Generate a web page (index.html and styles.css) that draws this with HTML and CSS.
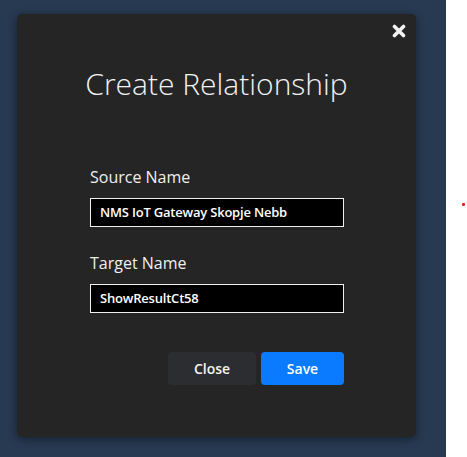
FILE: index.html
```html
<!DOCTYPE html>
<html>
<head>
<meta charset="utf-8">
<link rel="stylesheet" href="styles.css">
</head>
<body>
<div class="page">
  <div class="backdrop">
    <div class="dialog">
      <button class="close-x" aria-label="Close">
        <svg width="14" height="14" viewBox="0 0 14 14"><path d="M2.5 2.5 L11.5 11.5 M11.5 2.5 L2.5 11.5" stroke="#f2f2f2" stroke-width="3.6" stroke-linecap="round"/></svg>
      </button>
      <h1 class="title">Create Relationship</h1>
      <form class="form">
        <label class="label">Source Name</label>
        <div class="input">NMS IoT Gateway Skopje Nebb</div>
        <label class="label label-second">Target Name</label>
        <div class="input">ShowResultCt58</div>
        <div class="actions">
          <button type="button" class="btn btn-close">Close</button>
          <button type="button" class="btn btn-save">Save</button>
        </div>
      </form>
    </div>
  </div>
  <div class="side">
    <span class="dot"></span>
  </div>
</div>
</body>
</html>
```

FILE: styles.css
```css
* { box-sizing: border-box; }
html, body { margin: 0; padding: 0; background: #ffffff; }
body { font-family: "Open Sans", "Noto Sans", sans-serif; }
.page { display: flex; width: 467px; height: 457px; }
.backdrop {
  width: 446px;
  height: 457px;
  background: #273a52;
  padding: 14px 0 0 17px;
}
.dialog {
  position: relative;
  width: 399px;
  height: 423px;
  background: #252525;
  border-radius: 5px;
  box-shadow: 0 2px 10px rgba(0,0,0,0.45);
  padding-top: 50px;
}
.close-x {
  position: absolute;
  top: 10px;
  right: 10px;
  background: none;
  border: 0;
  padding: 0;
  width: 14px;
  height: 14px;
  display: flex;
}
.title {
  margin: 0;
  text-align: center;
  color: #f2f2f2;
  font-weight: 300;
  font-size: 30px;
  line-height: 40px;
}
.form {
  display: flex;
  flex-direction: column;
  padding-left: 73px;
  margin-top: 62px;
}
.label {
  color: #f0f0f0;
  font-size: 16px;
  font-weight: 400;
  line-height: 22px;
  margin-bottom: 10px;
}
.label-second { margin-top: 25px; }
.input {
  width: 254px;
  height: 29px;
  background: #000;
  border: 1px solid #f0f0f0;
  color: #fff;
  font-size: 13px;
  font-weight: 600;
  letter-spacing: -0.2px;
  line-height: 27px;
  padding-left: 9px;
}
.actions {
  display: flex;
  gap: 5px;
  margin-top: 39px;
  padding-left: 78px;
}
.btn {
  height: 33px;
  border: 0;
  border-radius: 4px;
  font-family: "Open Sans", "Noto Sans", sans-serif;
  font-size: 14px;
  font-weight: 600;
  color: #f4f4f4;
}
.btn-close { width: 88px; background: #2c2d30; }
.btn-save { width: 83px; background: #0a7bff; color: #fff; }
.side { position: relative; flex: 1; }
.dot {
  position: absolute;
  left: 16px;
  top: 203px;
  width: 3px;
  height: 3px;
  border-radius: 1px;
  background: #e8201c;
}
```
